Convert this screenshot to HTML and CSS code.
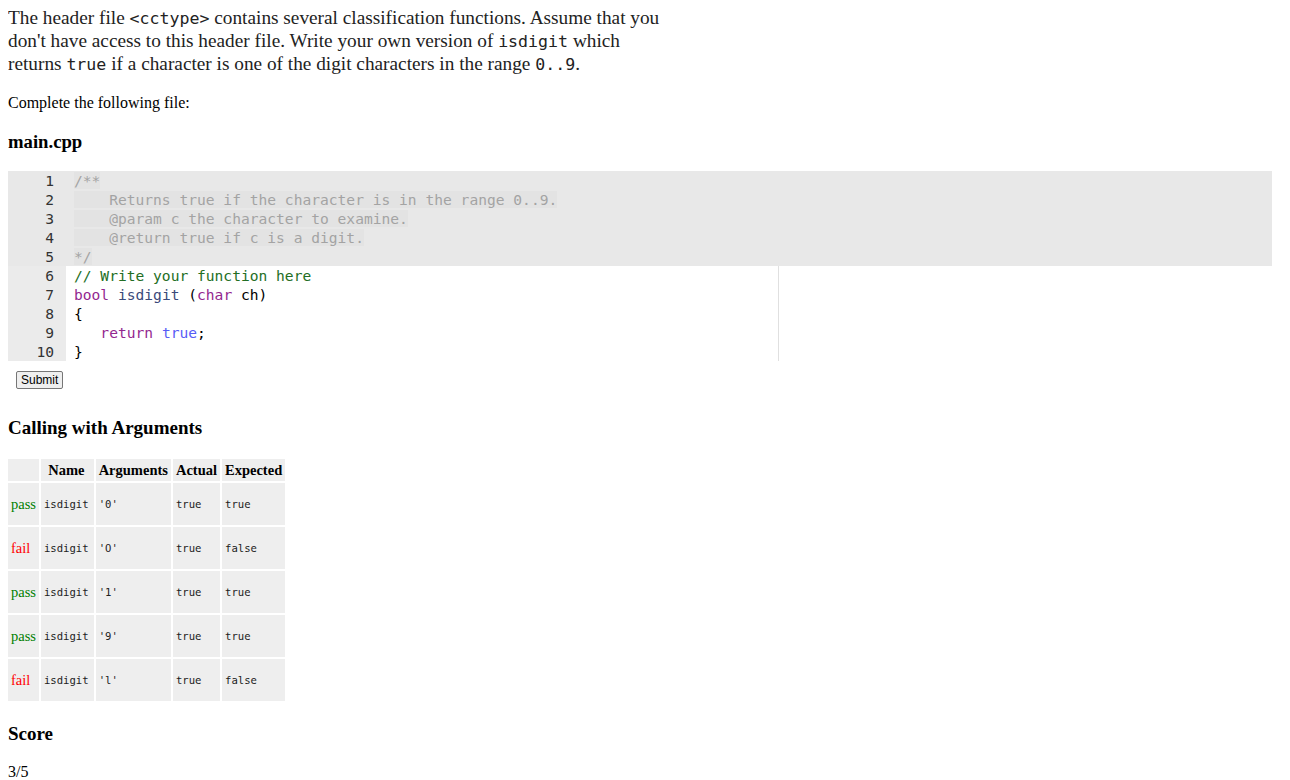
FILE: index.html
```html
<!DOCTYPE html>
<html>
<head>
<meta charset="utf-8">
<link rel="stylesheet" href="styles.css">
</head>
<body>
<div class="desc">
<p>The header file <code>&lt;cctype&gt;</code> contains several classification functions. Assume that you don't have access to this header file. Write your own version of <code>isdigit</code> which returns <code>true</code> if a character is one of the digit characters in the range <code>0..9</code>.</p>
</div>
<p class="complete">Complete the following file:</p>
<h3 class="file">main.cpp</h3>
<div class="editor">
  <div class="row ro"><span class="num">1</span><span class="line"><span class="rotext c">/**</span></span></div>
  <div class="row ro"><span class="num">2</span><span class="line"><span class="rotext c">    Returns true if the character is in the range 0..9.</span></span></div>
  <div class="row ro"><span class="num">3</span><span class="line"><span class="rotext c">    @param c the character to examine.</span></span></div>
  <div class="row ro"><span class="num">4</span><span class="line"><span class="rotext c">    @return true if c is a digit.</span></span></div>
  <div class="row ro"><span class="num">5</span><span class="line"><span class="rotext c">*/</span></span></div>
  <div class="row"><span class="num">6</span><span class="line"><span class="cm">// Write your function here</span></span></div>
  <div class="row"><span class="num">7</span><span class="line"><span class="kw">bool</span> <span class="fn">isdigit</span> (<span class="kw">char</span> ch)</span></div>
  <div class="row"><span class="num">8</span><span class="line">{</span></div>
  <div class="row"><span class="num">9</span><span class="line">   <span class="kw">return</span> <span class="bl">true</span>;</span></div>
  <div class="row"><span class="num">10</span><span class="line">}</span></div>
  <div class="margin"></div>
</div>
<div class="submit-wrap"><button class="submit">Submit</button></div>
<h3 class="section">Calling with Arguments</h3>
<table class="results">
  <tr><th></th><th>Name</th><th>Arguments</th><th>Actual</th><th>Expected</th></tr>
  <tr><td class="pass">pass</td><td><pre>isdigit</pre></td><td><pre>'0'</pre></td><td><pre>true</pre></td><td><pre>true</pre></td></tr>
  <tr><td class="fail">fail</td><td><pre>isdigit</pre></td><td><pre>'O'</pre></td><td><pre>true</pre></td><td><pre>false</pre></td></tr>
  <tr><td class="pass">pass</td><td><pre>isdigit</pre></td><td><pre>'1'</pre></td><td><pre>true</pre></td><td><pre>true</pre></td></tr>
  <tr><td class="pass">pass</td><td><pre>isdigit</pre></td><td><pre>'9'</pre></td><td><pre>true</pre></td><td><pre>true</pre></td></tr>
  <tr><td class="fail">fail</td><td><pre>isdigit</pre></td><td><pre>'l'</pre></td><td><pre>true</pre></td><td><pre>false</pre></td></tr>
</table>
<h3 class="section score">Score</h3>
<p class="scoreval">3/5</p>
</body>
</html>
```
FILE: styles.css
```css
body {
  margin: 0 8px;
  font-family: "Liberation Serif", "Times New Roman", serif;
  font-size: 16px;
  color: #000;
  background: #fff;
}
.desc p {
  margin: 6px 0 0 0;
  font-size: 19.3px;
  line-height: 23px;
  width: 665px;
  color: #222;
}
.desc code {
  font-family: "DejaVu Sans Mono", monospace;
  font-size: 16.6px;
  line-height: 1;
  color: #222;
}
.complete {
  margin: 18px 0 0 0;
  font-size: 16px;
  line-height: 20px;
}
.file {
  margin: 18px 0 0 0;
  font-size: 18.7px;
  line-height: 22px;
}
.editor {
  position: relative;
  margin: 18px 10px 0 -1px;
  font-family: "DejaVu Sans Mono", monospace;
  font-size: 14.6px;
  line-height: 19px;
  color: #000;
}
.row {
  display: flex;
  height: 19px;
  white-space: pre;
}
.row.ro { background: #e8e8e8; }
.num {
  flex: 0 0 59px;
  box-sizing: border-box;
  padding-right: 12px;
  text-align: right;
  background: #ebebeb;
  color: #333;
}
.ro .num { background: #e8e8e8; }
.line {
  padding-left: 8px;
  flex: 1;
}
.rotext { background: #e3e3e3; }
.c { color: #a3a3a3; }
.cm { color: #236e24; }
.kw { color: #93278f; }
.fn { color: #3a4a7a; }
.bl { color: #585cf6; }
.margin {
  position: absolute;
  left: 771px;
  top: 95px;
  bottom: 0;
  width: 1px;
  background: #e0e0e0;
}
.submit-wrap {
  padding: 9px 0 0 8px;
}
.submit {
  font-family: "Liberation Sans", Arial, sans-serif;
  font-size: 12px;
  height: 18px;
  padding: 0 4px;
  line-height: 14px;
  background: #efefef;
  border: 1px solid #767676;
  border-radius: 2px;
  color: #000;
}
.section {
  margin: 28px 0 0 0;
  font-size: 19px;
  line-height: 22px;
}
.results {
  margin-top: 18px;
  border-spacing: 2px;
  margin-left: -2px;
}
.results th {
  background: #eee;
  font-size: 14.5px;
  font-weight: bold;
  height: 22px;
  padding: 0 3px;
  text-align: center;
}
.results td {
  background: #eee;
  height: 42px;
  padding: 0 3px;
  font-size: 14.5px;
  vertical-align: middle;
  text-align: left;
}
.results th:nth-child(2), .results td:nth-child(2) { padding-right: 5px; }
.results pre {
  margin: 0;
  font-family: "DejaVu Sans Mono", monospace;
  font-size: 10.6px;
  color: #222;
}
.pass { color: green; }
.fail { color: red; }
.score { margin-top: 20px; }
.scoreval {
  margin: 17px 0 0 0;
  font-size: 16px;
  line-height: 20px;
}
```
